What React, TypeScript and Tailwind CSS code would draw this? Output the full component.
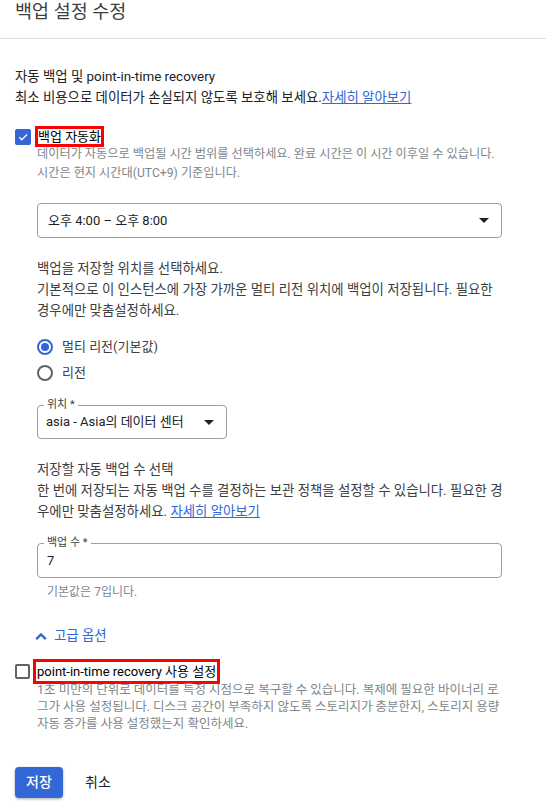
const font = "font-['Roboto','Noto_Sans_CJK_KR',sans-serif]";

function Checkbox({ checked }: { checked: boolean }) {
  if (checked) {
    return (
      <span className="flex h-4 w-4 shrink-0 items-center justify-center rounded-[2px] bg-[#3367d6]">
        <svg width="12" height="12" viewBox="0 0 24 24" fill="none">
          <path d="M4.5 12.5l5 5L20 7" stroke="#fff" strokeWidth="2.6" />
        </svg>
      </span>
    );
  }
  return <span className="block h-[15px] w-[15px] shrink-0 rounded-[2px] border-2 border-[#5f6368]" />;
}

function Radio({ checked, label }: { checked: boolean; label: string }) {
  return (
    <div className="flex h-[26px] items-center gap-[9px]">
      <span
        className={`flex h-4 w-4 items-center justify-center rounded-full border-2 ${
          checked ? "border-[#3367d6]" : "border-[#5f6368]"
        }`}
      >
        {checked && <span className="h-2 w-2 rounded-full bg-[#3367d6]" />}
      </span>
      <span className="text-[13px] text-[#3c4043]">{label}</span>
    </div>
  );
}

function Caret() {
  return (
    <svg width="10" height="5" viewBox="0 0 10 5">
      <path d="M0 0h10L5 5z" fill="#202124" />
    </svg>
  );
}

export default function App() {
  return (
    <div className={`h-[804px] w-[546px] overflow-hidden bg-white ${font} text-[#202124]`}>
      <div className="h-[39px] border-b border-[#dadce0] px-[15px]">
        <h1 className="text-[18.5px] leading-[24px] font-normal text-[#3c4043]">백업 설정 수정</h1>
      </div>

      <div className="w-[504px] pl-[15px]">
        <div className="mt-[27px] text-[13.4px] leading-[21px]">
          <p>자동 백업 및 point-in-time recovery</p>
          <p>
            최소 비용으로 데이터가 손실되지 않도록 보호해 보세요.
            <a className="text-[#3367d6] underline underline-offset-1">자세히 알아보기</a>
          </p>
        </div>

        <div className="mt-[18px] flex items-center gap-[4px]">
          <Checkbox checked />
          <span className="border-[3px] border-[#ff0000] text-[13px] leading-[15px] text-black">
            백업 자동화
          </span>
        </div>

        <div className="pl-[22px]">
          <p className="mt-[-2px] text-[12.2px] leading-[19px] text-[#80868b]">
            데이터가 자동으로 백업될 시간 범위를 선택하세요. 완료 시간은 이 시간 이후일 수 있습니다.
            시간은 현지 시간대(UTC+9) 기준입니다.
          </p>

          <div className="mt-[20px] flex h-[35px] w-[465px] items-center justify-between rounded-[4px] border border-[#9aa0a6] pr-[12px] pl-[10px]">
            <span className="text-[13px] text-[#202124]">오후 4:00 – 오후 8:00</span>
            <Caret />
          </div>

          <div className="mt-[20px] text-[13.4px] leading-[21px] text-[#3c4043]">
            <p>백업을 저장할 위치를 선택하세요.</p>
            <p>
              기본적으로 이 인스턴스에 가장 가까운 멀티 리전 위치에 백업이 저장됩니다. 필요한 경우에만
              맞춤설정하세요.
            </p>
          </div>

          <div className="mt-[13px] flex flex-col">
            <Radio checked label="멀티 리전(기본값)" />
            <Radio checked={false} label="리전" />
          </div>

          <div className="relative mt-[19px] flex h-[34px] w-[190px] items-center justify-between rounded-[4px] border border-[#9aa0a6] pr-[12px] pl-[8px]">
            <span className="absolute top-[-8px] left-[6px] bg-white px-[3px] text-[11px] leading-[14px] text-[#3c4043]">
              위치 *
            </span>
            <span className="text-[13px] text-[#202124]">asia - Asia의 데이터 센터</span>
            <Caret />
          </div>

          <div className="mt-[20px] text-[13.4px] leading-[21px] text-[#3c4043]">
            <p>저장할 자동 백업 수 선택</p>
            <p>
              한 번에 저장되는 자동 백업 수를 결정하는 보관 정책을 설정할 수 있습니다. 필요한 경우에만
              맞춤설정하세요.{" "}
              <a className="text-[#3367d6] underline underline-offset-1">자세히 알아보기</a>
            </p>
          </div>

          <div className="relative mt-[21px] flex h-[35px] w-[465px] items-center rounded-[4px] border border-[#9aa0a6] pl-[9px]">
            <span className="absolute top-[-8px] left-[6px] bg-white px-[3px] text-[11px] leading-[14px] text-[#3c4043]">
              백업 수 *
            </span>
            <span className="mt-[1px] text-[13px] text-[#202124]">7</span>
          </div>
          <p className="mt-[6px] pl-[10px] text-[12px] leading-[16px] text-[#80868b]">기본값은 7입니다.</p>

          <div className="mt-[26px] flex items-center gap-[7px] text-[13.4px] text-[#3367d6]">
            <svg width="12" height="8" viewBox="0 0 12 8" className="-ml-[2px]">
              <path d="M1.2 7.2L6 2.4l4.8 4.8" stroke="#3367d6" strokeWidth="2.4" fill="none" />
            </svg>
            <span>고급 옵션</span>
          </div>
        </div>

        <div className="mt-[13px] flex items-center gap-[3px]">
          <Checkbox checked={false} />
          <span className="border-[3px] border-[#ff0000] px-[1px] text-[13px] leading-[19px] text-black">
            point-in-time recovery 사용 설정
          </span>
        </div>
        <p className="mt-[-3px] pl-[22px] text-[12.5px] leading-[17px] text-[#80868b]">
          1초 미만의 단위로 데이터를 특정 시점으로 복구할 수 있습니다. 복제에 필요한 바이너리 로그가 사용
          설정됩니다. 디스크 공간이 부족하지 않도록 스토리지가 충분한지, 스토리지 용량 자동 증가를 사용
          설정했는지 확인하세요.
        </p>

        <div className="mt-[35px] flex items-center gap-[22px]">
          <button className="h-[31px] w-[48px] rounded-[4px] bg-[#3367d6] text-[14px] font-medium text-white shadow-[0_1px_3px_rgba(0,0,0,0.35)]">
            저장
          </button>
          <button className="text-[14px] text-[#202124]">취소</button>
        </div>
      </div>
    </div>
  );
}
